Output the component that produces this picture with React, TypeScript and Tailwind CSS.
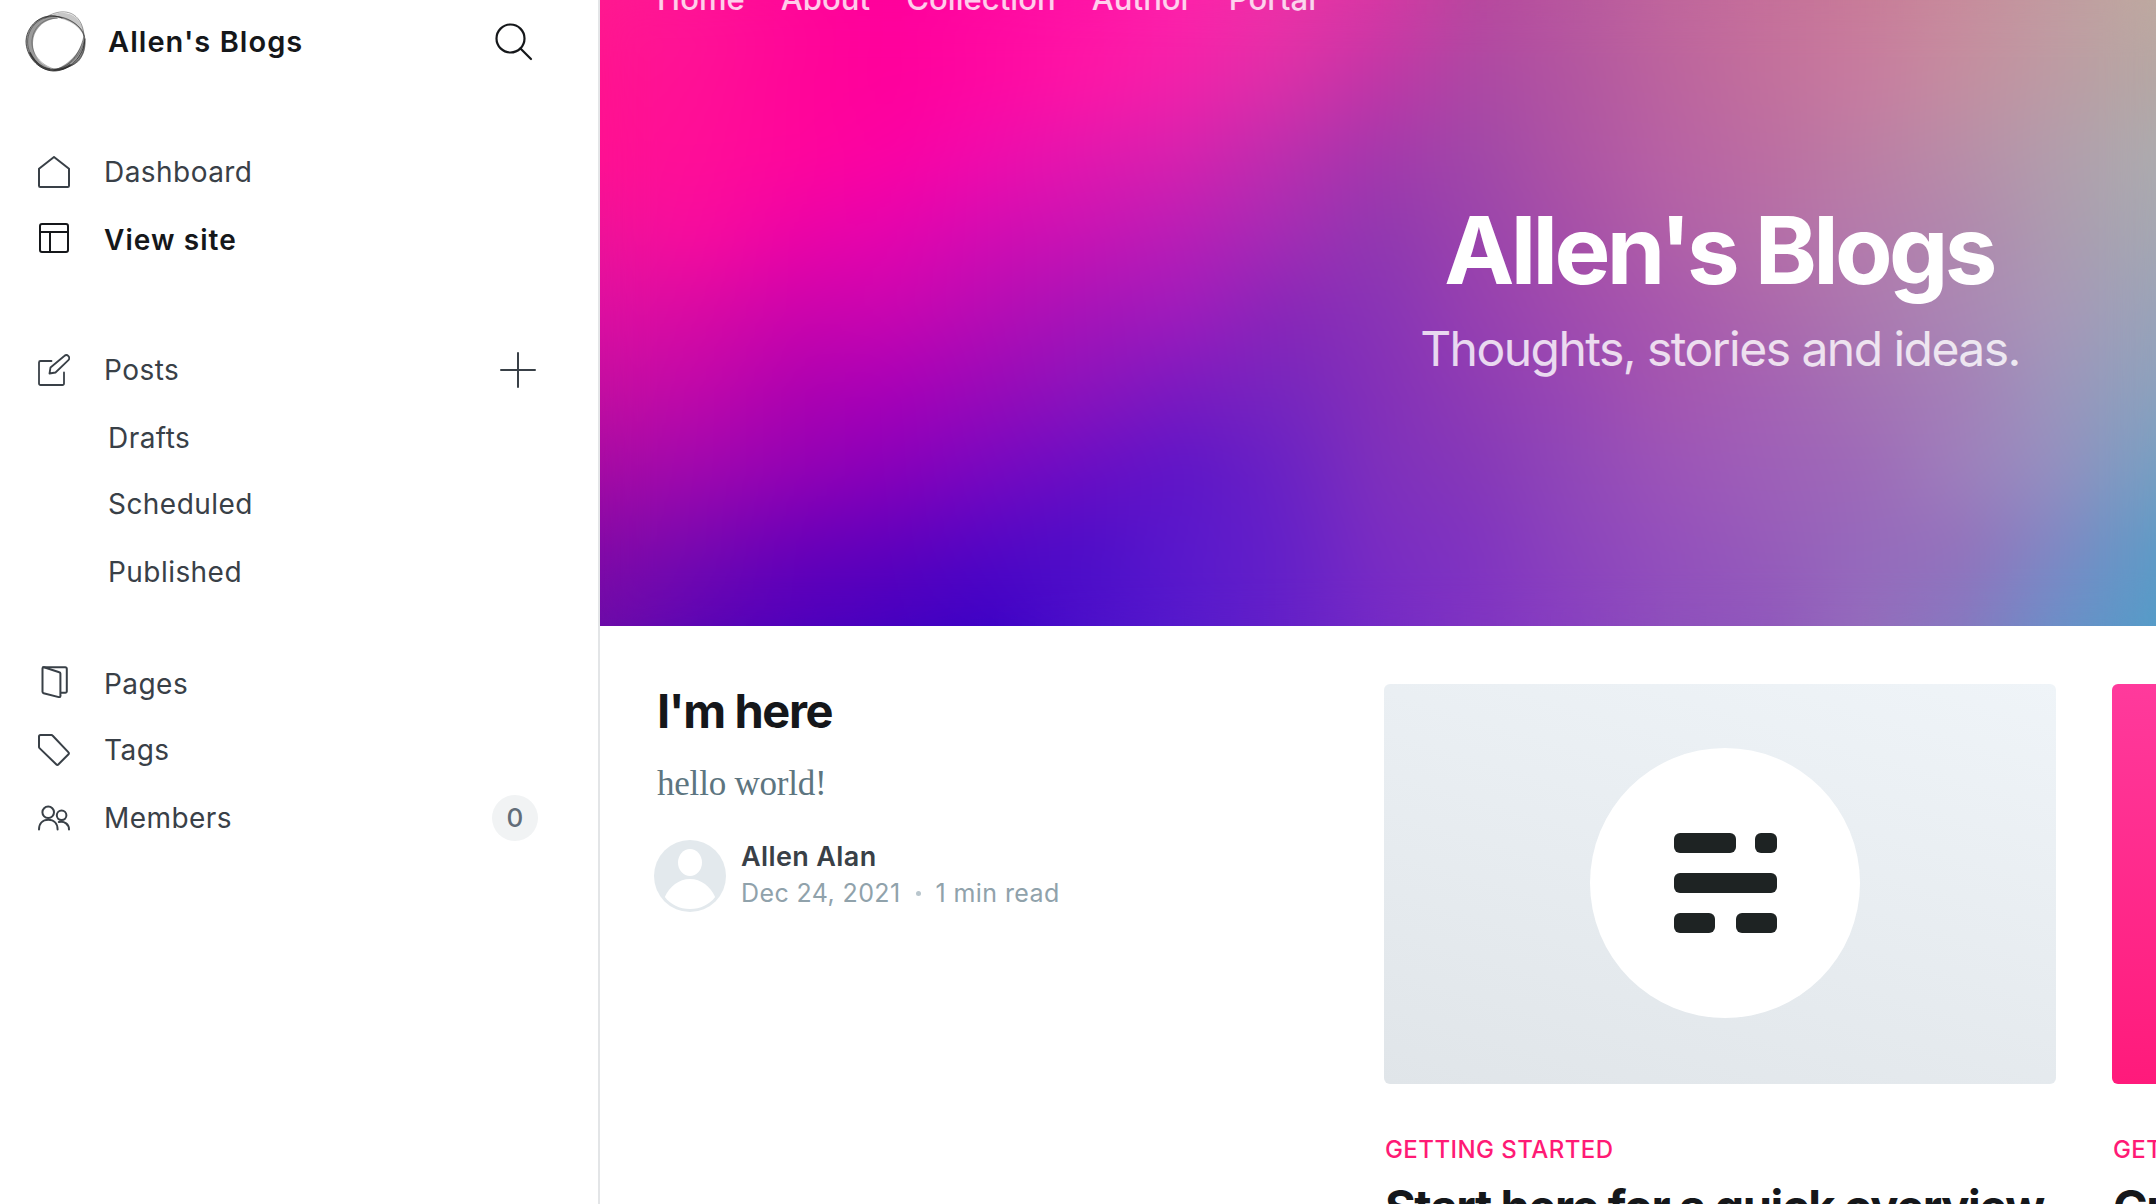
import React from "react";

const STOP_COUNT = 9;

// Colour columns of the cover image, left to right; each lists its colours from top to bottom.
const COVER_COLUMNS: string[][] = [
  ["#ff1a90", "#ff148f", "#ff1192", "#ee1398", "#dd10a0", "#c40fa0", "#a60ca3", "#850aa6", "#6c0ca8"],
  ["#ff1496", "#ff1096", "#ff0e98", "#f80c9e", "#d80aa3", "#c008aa", "#a008ae", "#7808b0", "#5a06b4"],
  ["#ff0898", "#ff0698", "#ff069c", "#ec04a6", "#cc04ac", "#ae02b0", "#9402b4", "#6a00b8", "#4e00bc"],
  ["#ff009c", "#ff009c", "#fb02a4", "#e404ae", "#c806b0", "#a800b8", "#8800ba", "#6000bc", "#4400c0"],
  ["#ff0aa0", "#ff08a2", "#f00cac", "#d20cb2", "#b60cb4", "#980ab8", "#7808c0", "#5406c4", "#3c02c6"],
  ["#ff14a6", "#ff16a6", "#e218ae", "#c814b4", "#a614b8", "#8a14bc", "#6a0ec4", "#4e0ec8", "#4c10ca"],
  ["#ff22aa", "#f222aa", "#d622ae", "#b81eb6", "#9e1cbc", "#7a1ac0", "#5e16c8", "#5a18cc", "#561acc"],
  ["#ee32a6", "#dc30a8", "#bc2eae", "#a42cb4", "#8826b8", "#7626be", "#6a22c4", "#6420c8", "#6420c8"],
  ["#d838a4", "#c036a6", "#a438ac", "#9038b0", "#8834b6", "#8430b8", "#7e30bc", "#7a2cc2", "#742ac6"],
  ["#b8489e", "#ac48a4", "#a048a8", "#9a44ac", "#9640b0", "#8e3cb4", "#8638b8", "#8034c0", "#8034c2"],
  ["#b8589e", "#b256a0", "#ae54a4", "#a650a8", "#a04cae", "#9848b4", "#9048b8", "#8c44bc", "#8840c0"],
  ["#c0669c", "#bc649e", "#b862a4", "#b060a8", "#a858ae", "#a456b0", "#9c54b8", "#9450bc", "#8e50bc"],
  ["#c6709a", "#c2709c", "#bc6ea2", "#b46ea8", "#ac68ac", "#a462b4", "#9e60b8", "#965cba", "#9058bc"],
  ["#c87c98", "#c87ca0", "#bc7ea4", "#b47cac", "#ac78b0", "#a472b4", "#9e6ab8", "#966abc", "#946cbc"],
  ["#c88c9c", "#c48ea0", "#b88ea8", "#b088ae", "#aa88b4", "#a480b8", "#9e80bc", "#9472bc", "#8679c0"],
  ["#c29ca0", "#bc9ca4", "#b29eac", "#ac9cb0", "#a898b8", "#9c96bc", "#9490c0", "#8088c4", "#6a90c8"],
  ["#beaaa0", "#b4a8a4", "#acacae", "#a4a8b2", "#98a4b8", "#8aa2bd", "#74a0c2", "#5c9cc6", "#549cc8"],
];

function CoverLayers() {
  const last = COVER_COLUMNS.length - 1;
  return (
    <>
      {COVER_COLUMNS.map((colors, i) => {
        const stops = colors.map((c, k) => `${c} ${(k / (STOP_COUNT - 1)) * 100}%`).join(", ");
        const mask =
          i === 0
            ? undefined
            : `linear-gradient(to right, transparent ${((i - 1) / last) * 100}%, #000 ${(i / last) * 100}%)`;
        return (
          <div
            key={i}
            className="absolute inset-0"
            style={{ backgroundImage: `linear-gradient(to bottom, ${stops})`, maskImage: mask }}
          />
        );
      })}
    </>
  );
}

function CoverImage() {
  return (
    <div className="absolute inset-y-0 left-0 w-[1556px]">
      <CoverLayers />
      <div className="absolute inset-0 blur-[24px]">
        <CoverLayers />
      </div>
    </div>
  );
}

function Icon({
  children,
  width = 2,
  className = "",
}: {
  children: React.ReactNode;
  width?: number;
  className?: string;
}) {
  return (
    <svg
      viewBox="0 0 32 32"
      className={`size-8 shrink-0 ${className}`}
      fill="none"
      stroke="currentColor"
      strokeWidth={width}
      strokeLinecap="round"
      strokeLinejoin="round"
    >
      {children}
    </svg>
  );
}

const HomeIcon = () => (
  <Icon>
    <path d="M1 12.800 16 1l15 11.800V29.700a1.300 1.300 0 0 1-1.300 1.300H2.300A1.300 1.300 0 0 1 1 29.700z" />
  </Icon>
);
const LayoutIcon = () => (
  <Icon className="mb-1">
    <rect x="2" y="2" width="28" height="28" rx="2" />
    <path d="M2 10h28M12 10v20" />
  </Icon>
);
const EditIcon = () => (
  <Icon width={1.8}>
    <path d="M13.500 7H2.500A1.500 1.500 0 0 0 1 8.500v21A1.500 1.500 0 0 0 2.500 31h22a1.500 1.500 0 0 0 1.500-1.500V18.500" />
    <path d="m17.500 18.500-6 1 1-6L26.300 2a2.900 2.900 0 0 1 4.100 4.200z" />
  </Icon>
);
const PagesIcon = () => (
  <Icon className="mb-1">
    <path d="M5 1.200h22.300A1.500 1.500 0 0 1 28.800 2.700v22.600a1.500 1.500 0 0 1-1.500 1.500H23" />
    <path d="M4.500 2.500v23.300a1.500 1.500 0 0 0 1.100 1.400l15.300 3.900a1.200 1.200 0 0 0 1.500-1.200V7.600a1.500 1.500 0 0 0-1.100-1.400L6 1.300A1.200 1.200 0 0 0 4.500 2.500z" />
  </Icon>
);
const TagIcon = () => (
  <Icon>
    <path d="M1 2.500A1.500 1.500 0 0 1 2.500 1h10.900a1.500 1.500 0 0 1 1.100.500L30.500 18.400a1.300 1.300 0 0 1 0 1.900L20.300 30.500a1.300 1.300 0 0 1-1.900 0L1.500 14.100A1.500 1.500 0 0 1 1 13z" />
  </Icon>
);
const MembersIcon = () => (
  <Icon>
    <circle cx="10.200" cy="10.300" r="5.800" />
    <path d="M1 27.500c0-6 3.700-9.800 9.300-9.800s9.300 3.800 9.300 9.800" />
    <circle cx="23.600" cy="13.300" r="4.800" />
    <path d="M20.800 20c5.800-1.200 10.200 2.300 10.200 7.500" />
  </Icon>
);

function BrandRing() {
  return (
    <svg viewBox="24 10 64 64" className="size-16 shrink-0" fill="none" strokeLinecap="round">
      <path
        fill="#8a8a8a"
        fillOpacity=".85"
        d="M56 15.500C42 13.500 30 23 26.500 37c-2.500 13 7 30 24 33.500L50 68C38 63 31 52 33.500 38 36 27 45 19 58 18.500z"
      />
      <path fill="#bdbdbd" fillOpacity=".85" d="M48 17C58 10.500 70 11.500 77 18.500c4.500 5 7 11 7 18C79 25 66 17 48 17z" />
      <path
        fill="#8f8f8f"
        fillOpacity=".9"
        d="M83 33c4 9 2.500 19-3 26.500C74 67 64 69 52 70.500 67 66 80 54 84 37z"
      />
      <g stroke="#2b2b2b" strokeWidth="1">
        <path strokeOpacity=".8" d="M62 18C45 11 27 23 26 41c0 15 12 29 27 30 16 .5 31-14 32-32" />
        <path strokeOpacity=".5" d="M84 36C79 20 58 12 42 19c-12 6-17 19-13 31 4 13 16 20 27 19 14-2 24-15 28-33" />
        <path strokeOpacity=".45" d="M45 18C58 9 72 10 79 20c6 8 6 22 4 32-4 11-15 17-28 18" />
        <path strokeOpacity=".35" d="M57 18C43 18 33 28 32 40c-1 14 9 25 22 29 13 0 27-13 30-27" />
        <path strokeOpacity=".5" d="M50 15.500C62 16 78 22 83.500 33c3 8 2 20-5 28-7 6-15 8-24 9.500" />
        <path strokeOpacity=".8" strokeWidth="1.800" d="M30 53c5 10 13 17 24 17 6 0 12-2 16-5" />
      </g>
    </svg>
  );
}

function NavItem({
  icon,
  label,
  className = "h-[67px]",
  children,
}: {
  icon: React.ReactNode;
  label: string;
  className?: string;
  children?: React.ReactNode;
}) {
  return (
    <a className={`flex items-center pl-[38px] pr-[60px] ${className}`}>
      {icon}
      <span className="ml-[34px] flex-1">{label}</span>
      {children}
    </a>
  );
}

function Sidebar() {
  return (
    <aside className="flex h-full w-[600px] shrink-0 flex-col border-r-2 border-[#e3e5e7] bg-white text-[28px] leading-none tracking-[0.016em] text-[#394047]">
      <header className="flex h-[84px] items-center pl-6 pr-[64px] text-[#15171a]">
        <BrandRing />
        <span className="mb-0.5 ml-5 flex-1 text-[29px] font-semibold tracking-[0.036em]">Allen's Blogs</span>
        <svg viewBox="0 0 40 40" className="size-10" fill="none" stroke="currentColor" strokeWidth="2.200" strokeLinecap="round">
          <circle cx="16.500" cy="16.500" r="14" />
          <path d="m26.500 26.500 10.500 10.500" />
        </svg>
      </header>

      <nav className="mt-[54px]">
        <NavItem icon={<HomeIcon />} label="Dashboard" className="h-[68px]" />
        <NavItem
          icon={<LayoutIcon />}
          label="View site"
          className="h-[68px] font-semibold tracking-[0.038em] text-[#15171a]"
        />
      </nav>

      <nav className="mt-[62px]">
        <NavItem icon={<EditIcon />} label="Posts">
          <svg viewBox="0 0 36 36" className="mr-0.5 size-9" stroke="currentColor" strokeWidth="2" strokeLinecap="round">
            <path d="M18 1v34M1 18h34" />
          </svg>
        </NavItem>
        <a className="flex h-[69px] items-center pl-[108px]">Drafts</a>
        <a className="flex h-[64px] items-center pl-[108px]">Scheduled</a>
        <a className="flex h-[71px] items-center pl-[108px]">Published</a>
      </nav>

      <nav className="mt-[43px]">
        <NavItem icon={<PagesIcon />} label="Pages" />
        <NavItem icon={<TagIcon />} label="Tags" className="h-[66px]" />
        <NavItem icon={<MembersIcon />} label="Members" className="h-[69px]">
          <span className="flex size-[46px] items-center justify-center rounded-full bg-[#f1f3f4] text-[26px] font-medium text-[#626d79]">
            0
          </span>
        </NavItem>
      </nav>
    </aside>
  );
}

function Hero() {
  return (
    <header className="relative h-[626px] w-[2240px] overflow-hidden">
      <CoverImage />
      <div className="relative flex h-full flex-col px-14 text-white">
        <nav className="-mt-[22px] flex h-[40px] shrink-0 items-center gap-[36px] pl-[1px] text-[31px] font-medium leading-none tracking-[0.002em] text-white/80">
          <a>Home</a>
          <a>About</a>
          <a>Collection</a>
          <a>Author</a>
          <a>Portal</a>
        </nav>
        <div className="mt-[184px] flex flex-col items-center">
          <h1 className="pr-[2px] text-[94px] font-bold leading-[96px] tracking-[-0.039em]">Allen's Blogs</h1>
          <p className="mt-[22px] text-[48px] leading-[58px] tracking-[-0.032em] text-white/80">Thoughts, stories and ideas.</p>
        </div>
      </div>
    </header>
  );
}

function PublicationMark() {
  return (
    <div className="flex size-[270px] items-center justify-center rounded-full bg-white">
      <div className="flex w-[103px] flex-col gap-5">
        <div className="flex justify-between">
          <i className="h-5 w-[62px] rounded-[6px] bg-[#1e2323]" />
          <i className="h-5 w-[22px] rounded-[6px] bg-[#1e2323]" />
        </div>
        <i className="h-5 rounded-[6px] bg-[#1e2323]" />
        <div className="flex justify-between">
          <i className="h-5 w-[41px] rounded-[6px] bg-[#1e2323]" />
          <i className="h-5 w-[41px] rounded-[6px] bg-[#1e2323]" />
        </div>
      </div>
    </div>
  );
}

function Avatar() {
  return (
    <svg viewBox="0 0 72 72" className="size-[72px] shrink-0">
      <circle cx="36" cy="36" r="36" fill="#e3e9ed" />
      <ellipse cx="36" cy="22.500" rx="12" ry="13.500" fill="#fff" />
      <path d="M10.800 57C15.500 46.500 25 39 36 39s20.500 7.500 25.200 18C55.500 64.500 46.500 69 36 69s-19.500-4.500-25.200-12z" fill="#fff" />
    </svg>
  );
}

function PostCard({ image, title }: { image: React.ReactNode; title: string }) {
  return (
    <article className="w-[672px] shrink-0">
      {image}
      <div className="mt-[53px] pl-[1px] text-[24px] font-medium leading-[26px] tracking-[0.018em] text-[#ff1a75]">GETTING STARTED</div>
      <h2 className="mt-[18px] whitespace-nowrap pl-[1px] text-[47px] font-bold leading-[52px] tracking-[-0.03em] text-[#15171a]">{title}</h2>
    </article>
  );
}

export default function App() {
  return (
    <div className="flex h-[1204px] w-[2156px] overflow-hidden bg-white font-['Inter',sans-serif]">
      <Sidebar />
      <main className="min-w-0 flex-1 overflow-hidden">
        <Hero />
        <section className="flex gap-14 px-14 pt-[58px]">
          <article className="w-[672px] shrink-0">
            <h2 className="pl-[1px] text-[47px] font-bold leading-[54px] tracking-[-0.03em] text-[#15171a]">I'm here</h2>
            <p className="mt-[26px] pl-[1px] font-['Liberation_Serif',serif] text-[35px] leading-[40px] tracking-[-0.006em] text-[#5d7580]">
              hello world!
            </p>
            <div className="-ml-[2px] mt-[36px] flex items-center">
              <Avatar />
              <div className="-mt-0.5 ml-[15px]">
                <div className="text-[27px] font-semibold leading-[36px] tracking-[0.014em] text-[#394047]">Allen Alan</div>
                <div className="flex items-center text-[25px] leading-[36px] tracking-[0.016em] text-[#90a2ab]">
                  <span>Dec 24, 2021</span>
                  <i className="mx-[15px] size-[5px] rounded-full bg-[#b9c6cd]" />
                  <span>1 min read</span>
                </div>
              </div>
            </div>
          </article>
          <PostCard
            title="Start here for a quick overview"
            image={
              <div className="flex h-[400px] items-center justify-center rounded-[6px] bg-[linear-gradient(196deg,#eff4f8,#e0e5e9)] pb-0.5 pl-[10px]">
                <PublicationMark />
              </div>
            }
          />
          <PostCard
            title="Customizing your brand"
            image={<div className="h-[400px] rounded-[6px] bg-[linear-gradient(to_bottom,#ff3a9c,#ff1a7b)]" />}
          />
        </section>
      </main>
    </div>
  );
}
